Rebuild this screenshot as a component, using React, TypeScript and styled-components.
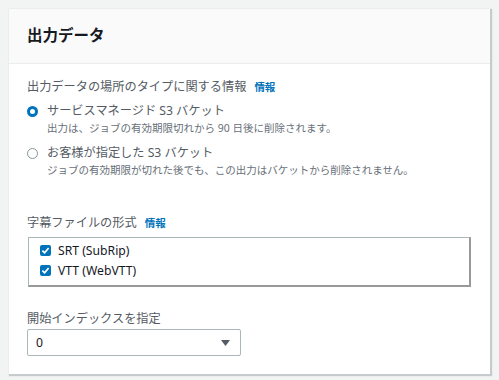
import React from "react";
import styled, { createGlobalStyle } from "styled-components";

const GlobalStyle = createGlobalStyle`
  body {
    margin: 0;
    background: #f2f3f3;
    font-family: "Noto Sans", "Noto Sans CJK JP", sans-serif;
    color: #16191f;
  }
`;

const Page = styled.div`
  padding: 9px 8px 8px 9px;
`;

const Card = styled.section`
  background: #fff;
  box-shadow: 1px 1px 1px 1px rgba(0, 28, 36, 0.18);
  width: 481px;
`;

const Header = styled.header`
  background: #fafafa;
  border-bottom: 1px solid #eaeded;
  box-sizing: border-box;
  height: 55px;
  display: flex;
  align-items: center;
  padding: 0 18px 3px;
`;

const Title = styled.h2`
  margin: 0;
  font-size: 15.5px;
  font-weight: 700;
  color: #16191f;
`;

const Body = styled.div`
  padding: 13px 18px 18px;
  display: flex;
  flex-direction: column;
`;

const Field = styled.div<{ $gap?: number }>`
  display: flex;
  flex-direction: column;
  margin-top: ${({ $gap }) => $gap ?? 0}px;
`;

const Label = styled.div`
  font-size: 12.2px;
  line-height: 20px;
  color: #545b64;
  display: flex;
  align-items: center;
  gap: 8px;
`;

const Info = styled.a`
  color: #0073bb;
  font-weight: 700;
  font-size: 10.5px;
`;

const RadioGroup = styled.div`
  display: flex;
  flex-direction: column;
  gap: 8px;
  margin-top: 5px;
`;

const RadioRow = styled.div`
  display: flex;
  gap: 9px;
`;

const Radio = styled.span<{ $checked?: boolean }>`
  flex: none;
  box-sizing: border-box;
  width: 11px;
  height: 11px;
  border-radius: 50%;
  margin-top: 4px;
  border: ${({ $checked }) => ($checked ? "3px solid #0073bb" : "1px solid #879596")};
  background: #fff;
`;

const RadioText = styled.div`
  display: flex;
  flex-direction: column;
`;

const RadioLabel = styled.div`
  font-size: 12.2px;
  line-height: 18px;
  color: #545b64;
`;

const Description = styled.div`
  font-size: 10.5px;
  line-height: 16px;
  color: #687078;
`;

const CheckBox = styled.div`
  margin-top: 4px;
  margin-left: 1px;
  box-sizing: border-box;
  width: 443px;
  border: 1px solid #aab7b8;
  border-right: 2px solid #999;
  border-bottom: 2px solid #999;
  padding: 2px 11px 5px;
  display: flex;
  flex-direction: column;
`;

const CheckRow = styled.label`
  display: flex;
  align-items: center;
  gap: 7px;
  height: 20px;
  font-size: 12.2px;
  color: #16191f;
`;

const Box = styled.span`
  width: 11px;
  height: 11px;
  border-radius: 2px;
  background: #0073bb;
  display: flex;
  align-items: center;
  justify-content: center;
`;

const Select = styled.div`
  box-sizing: border-box;
  width: 214px;
  height: 27px;
  border: 1px solid #aab7b8;
  border-radius: 2px;
  display: flex;
  align-items: center;
  justify-content: space-between;
  padding: 0 10px 0 8px;
  font-size: 12.2px;
`;

const Check = () => (
  <svg width="9" height="9" viewBox="0 0 10 10">
    <path d="M1.5 5.2 L4 7.6 L8.5 2.2" fill="none" stroke="#fff" strokeWidth="1.9" />
  </svg>
);

const Caret = () => (
  <svg width="9" height="6" viewBox="0 0 9 6">
    <path d="M0 0 H9 L4.5 6 Z" fill="#545b64" />
  </svg>
);

export default function App() {
  return (
    <>
      <GlobalStyle />
      <Page>
        <Card>
          <Header>
            <Title>出力データ</Title>
          </Header>
          <Body>
            <Field>
              <Label>
                出力データの場所のタイプに関する情報 <Info>情報</Info>
              </Label>
              <RadioGroup>
                <RadioRow>
                  <Radio $checked />
                  <RadioText>
                    <RadioLabel>サービスマネージド S3 バケット</RadioLabel>
                    <Description>出力は、ジョブの有効期限切れから 90 日後に削除されます。</Description>
                  </RadioText>
                </RadioRow>
                <RadioRow>
                  <Radio />
                  <RadioText>
                    <RadioLabel>お客様が指定した S3 バケット</RadioLabel>
                    <Description>ジョブの有効期限が切れた後でも、この出力はバケットから削除されません。</Description>
                  </RadioText>
                </RadioRow>
              </RadioGroup>
            </Field>
            <Field $gap={35}>
              <Label>
                字幕ファイルの形式 <Info>情報</Info>
              </Label>
              <CheckBox>
                <CheckRow>
                  <Box>
                    <Check />
                  </Box>
                  SRT (SubRip)
                </CheckRow>
                <CheckRow>
                  <Box>
                    <Check />
                  </Box>
                  VTT (WebVTT)
                </CheckRow>
              </CheckBox>
            </Field>
            <Field $gap={22}>
              <Label>開始インデックスを指定</Label>
              <Select>
                <span>0</span>
                <Caret />
              </Select>
            </Field>
          </Body>
        </Card>
      </Page>
    </>
  );
}
